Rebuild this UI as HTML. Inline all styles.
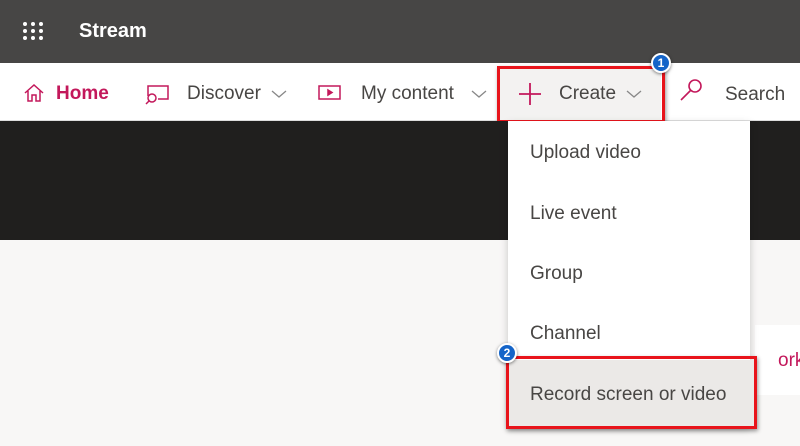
<!DOCTYPE html>
<html><head><style>
body{margin:0;width:800px;height:446px;overflow:hidden;background:#f8f7f6;font-family:"Liberation Sans",sans-serif;position:relative}
.top{position:absolute;left:0;top:0;width:800px;height:63px;background:#474645}
.nav{position:absolute;left:0;top:63px;width:800px;height:57px;background:#fff;border-bottom:1px solid #ddd}
.band{position:absolute;left:0;top:121px;width:800px;height:119px;background:#201f1e}
.t{position:absolute;font-size:19px;color:#484644;white-space:nowrap}
.pk{color:#c3185b}
.menu{position:absolute;left:508px;top:121px;width:242px;height:305px;background:#fff;box-shadow:0 3px 8px rgba(0,0,0,.2)}
.badge{position:absolute;width:16px;height:16px;border-radius:50%;background:#1464c8;border:2px solid #fff;color:#fff;font-size:12px;font-weight:bold;text-align:center;line-height:16px;box-shadow:0 1px 3px rgba(0,0,0,.5)}
</style></head><body>
<div class="top"></div>
<svg style="position:absolute;left:22px;top:21px" width="22" height="20"><g fill="#fff">
<circle cx="3" cy="3" r="2"/><circle cx="11" cy="3" r="2"/><circle cx="19" cy="3" r="2"/>
<circle cx="3" cy="10" r="2"/><circle cx="11" cy="10" r="2"/><circle cx="19" cy="10" r="2"/>
<circle cx="3" cy="17" r="2"/><circle cx="11" cy="17" r="2"/><circle cx="19" cy="17" r="2"/></g></svg>
<div class="t" style="left:79px;top:20px;color:#fff;font-weight:bold;font-size:20px">Stream</div>
<div class="nav"></div>
<svg style="position:absolute;left:23px;top:83px" width="22" height="20" fill="none" stroke="#c3185b" stroke-width="1.5"><path d="M2 10 L11 2 L20 10 M5 8 V18 H9 V12 H13 V18 H17 V8"/></svg>
<div class="t pk" style="left:56px;top:83px;font-weight:bold">Home</div>
<svg style="position:absolute;left:144px;top:84px" width="26" height="22" fill="none" stroke="#c3185b" stroke-width="1.5"><path d="M4 12 V2 H24 V15 H14"/><circle cx="8" cy="14" r="4"/><path d="M5 17 L2 20"/></svg>
<div class="t" style="left:187px;top:83px">Discover</div>
<svg style="position:absolute;left:271px;top:89px" width="16" height="10" fill="none" stroke="#888" stroke-width="1.3"><path d="M1 2 L8 8 L15 2"/></svg>
<svg style="position:absolute;left:318px;top:85px" width="24" height="16" fill="none" stroke="#c3185b" stroke-width="1.5"><rect x="1" y="1" width="21" height="13"/><path d="M10 5 L14 7.5 L10 10 Z" fill="#c3185b"/></svg>
<div class="t" style="left:361px;top:83px">My content</div>
<svg style="position:absolute;left:471px;top:89px" width="16" height="10" fill="none" stroke="#888" stroke-width="1.3"><path d="M1 2 L8 8 L15 2"/></svg>
<div style="position:absolute;left:499px;top:67px;width:162px;height:53px;background:#f3f2f1"></div>
<svg style="position:absolute;left:518px;top:82px" width="24" height="24" stroke="#c3185b" stroke-width="1.8"><path d="M12 1 V23 M1 12 H23"/></svg>
<div class="t" style="left:559px;top:83px">Create</div>
<svg style="position:absolute;left:626px;top:89px" width="16" height="10" fill="none" stroke="#888" stroke-width="1.3"><path d="M1 2 L8 8 L15 2"/></svg>
<div style="position:absolute;left:497px;top:66px;width:162px;height:51px;border:3px solid #e8141b;box-shadow:1px 2px 4px rgba(0,0,0,.4)"></div>
<svg style="position:absolute;left:679px;top:78px" width="26" height="26" fill="none" stroke="#c3185b" stroke-width="1.6"><circle cx="16" cy="8" r="6"/><path d="M12 12 L2 22"/></svg>
<div class="t" style="left:725px;top:84px">Search</div>
<div class="badge" style="left:651px;top:53px">1</div>
<div class="band"></div>
<div style="position:absolute;left:755px;top:325px;width:45px;height:70px;background:#fff"></div>
<div class="t pk" style="left:778px;top:350px;font-weight:normal">orker</div>
<div class="menu"></div>
<div class="t" style="left:530px;top:142px">Upload video</div>
<div class="t" style="left:530px;top:203px">Live event</div>
<div class="t" style="left:530px;top:263px">Group</div>
<div class="t" style="left:530px;top:323px">Channel</div>
<div style="position:absolute;left:508px;top:360px;width:247px;height:66px;background:#ebe9e7"></div>
<div class="t" style="left:530px;top:384px">Record screen or video</div>
<div style="position:absolute;left:506px;top:356px;width:245px;height:67px;border:3px solid #e8141b;box-shadow:1px 2px 4px rgba(0,0,0,.4)"></div>
<div class="badge" style="left:497px;top:343px">2</div>
</body></html>
